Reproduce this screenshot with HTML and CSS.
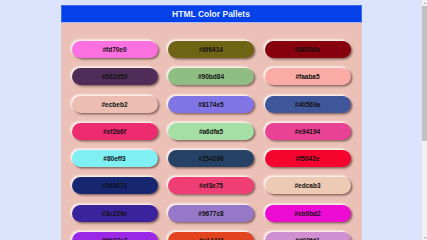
FILE: index.html
```html
<!DOCTYPE html>
<html lang="en">
<head>
    <meta charset="utf-8"/>
    <title>HTML Color Pallets</title>
    <link rel="stylesheet" href="styles.css">
</head>
<body>
<div class="pallet-wrapper">
    <h1 class="pallet-title">HTML Color Pallets</h1>
    <div class="pallet-grid">
        <div class="pallet" style="background: #fd70e0">#fd70e0</div>
        <div class="pallet" style="background: #6f6414">#6f6414</div>
        <div class="pallet" style="background: #86000e">#86000e</div>

        <div class="pallet" style="background: #502d59">#502d59</div>
        <div class="pallet" style="background: #90bd84">#90bd84</div>
        <div class="pallet" style="background: #faaba5">#faaba5</div>

        <div class="pallet" style="background: #ecbeb2">#ecbeb2</div>
        <div class="pallet" style="background: #8174e5">#8174e5</div>
        <div class="pallet" style="background: #40569a">#40569a</div>

        <div class="pallet" style="background: #ef2b6f">#ef2b6f</div>
        <div class="pallet" style="background: #a6dfa5">#a6dfa5</div>
        <div class="pallet" style="background: #e94194">#e94194</div>

        <div class="pallet" style="background: #80eff3">#80eff3</div>
        <div class="pallet" style="background: #254266">#254266</div>
        <div class="pallet" style="background: #f5042e">#f5042e</div>

        <div class="pallet" style="background: #162671">#162671</div>
        <div class="pallet" style="background: #ef3e75">#ef3e75</div>
        <div class="pallet" style="background: #edcab3">#edcab3</div>

        <div class="pallet" style="background: #3c239e">#3c239e</div>
        <div class="pallet" style="background: #9677c8">#9677c8</div>
        <div class="pallet" style="background: #eb0bd2">#eb0bd2</div>

        <div class="pallet" style="background: #9b27e7">#9b27e7</div>
        <div class="pallet" style="background: #e1441f">#e1441f</div>
        <div class="pallet" style="background: #d08fd1">#d08fd1</div>

        <div class="pallet" style="background: #3fa7c2">#3fa7c2</div>
        <div class="pallet" style="background: #f2d35a">#f2d35a</div>
        <div class="pallet" style="background: #5b8e3d">#5b8e3d</div>
    </div>
</div>

<!-- stand-in for the browser scrollbar -->
<div class="scrollbar">
    <span class="scroll-arrow">&#9652;</span>
    <div class="scroll-thumb"></div>
    <span class="scroll-arrow scroll-arrow-down">&#9662;</span>
</div>
</body>
</html>
```

FILE: styles.css
```css
body {
    margin: 0 5px 0 0;
    padding-top: 5px;
    background: #dce3fc;
    font-family: "Liberation Sans", Arial, sans-serif;
}

.pallet-wrapper {
    width: 301px;
    margin: 0 auto;
    background: #ebc1b7;
}

.pallet-title {
    margin: 0;
    height: 16px;
    line-height: 16px;
    background: #0441e8;
    border: solid 1px #3f6af0;
    border-bottom-color: #a9bdf6;
    color: #eef2ff;
    font-size: 8.5px;
    font-weight: bold;
    text-align: center;
}

.pallet-grid {
    display: grid;
    grid-template-columns: repeat(3, 86px);
    justify-content: space-between;
    row-gap: 10.3px;
    padding: 18px 11px 20px;
}

.pallet {
    height: 17px;
    line-height: 17px;
    border-radius: 9px;
    text-align: center;
    font-size: 6.5px;
    font-weight: bold;
    color: #111;
    box-shadow: 1.5px 1.5px 2px rgba(60, 30, 25, 0.55),
                -1.5px -1.5px 2px rgba(255, 255, 255, 0.85);
}

.scrollbar {
    position: fixed;
    top: 0;
    right: 0;
    width: 5px;
    height: 100%;
    display: flex;
    flex-direction: column;
    background: #f1f1f1;
}

.scroll-arrow {
    height: 5px;
    line-height: 5px;
    font-size: 4px;
    color: #a3a3a3;
    text-align: center;
}

.scroll-arrow-down {
    margin-top: auto;
}

.scroll-thumb {
    height: 135px;
    margin-top: 1px;
    background: #c1c1c1;
}
```
